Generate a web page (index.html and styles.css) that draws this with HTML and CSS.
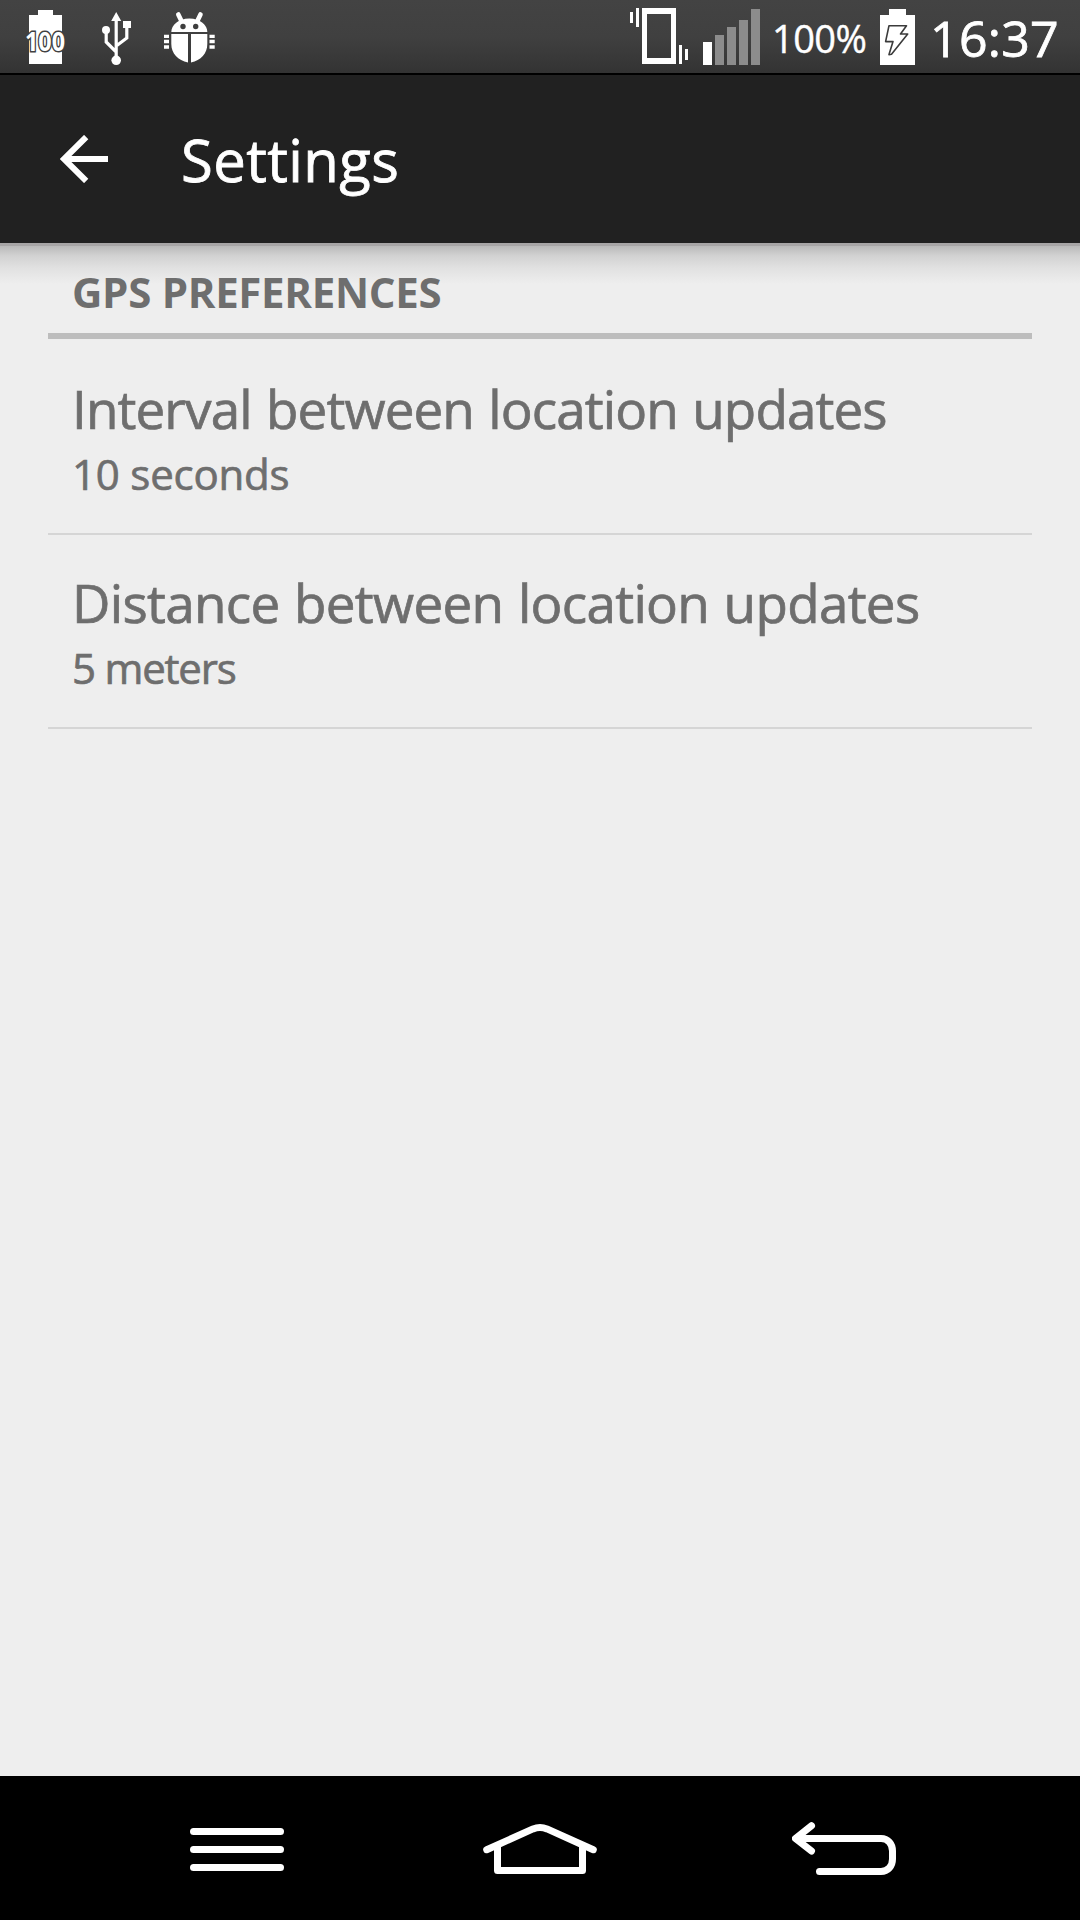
FILE: index.html
```html
<!DOCTYPE html>
<html lang="en">
<head>
<meta charset="utf-8">
<title>Settings</title>
<link rel="stylesheet" href="styles.css">
</head>
<body>
<div class="screen">
  <div class="status-bar">
    <div class="notifications">
      <svg class="battery-level" width="42" height="73" viewBox="25 0 42 73">
        <path fill="#fff" d="M38 10h15v5h9v49H29V15h9z"/>
        <text x="25" y="50.5" class="battery-text" textLength="40" lengthAdjust="spacingAndGlyphs">100</text>
      </svg>
      <svg width="30" height="73" viewBox="102 0 30 73">
        <g fill="none" stroke="#fff" stroke-width="3.2"><path d="M116.2 18v42M106.2 30v12l10 10M126.8 26v12l-10.6 8"/></g>
        <path fill="#fff" d="M116.2 12l5 9h-10zM123 21h8v7h-8z"/>
        <circle cx="106" cy="30" r="4" fill="#fff"/><circle cx="116.2" cy="60.3" r="4.8" fill="#fff"/>
      </svg>
      <svg width="52" height="73" viewBox="163 0 52 73">
        <path fill="#fff" d="M171.3 32c0-7 7-13.500 18-13.500s18 6.500 18 13.500z"/>
        <path stroke="#fff" stroke-width="4.600" stroke-linecap="round" d="M178.300 14.500l3.400 7M200.500 14.500l-3.400 7"/>
        <circle cx="183" cy="26.500" r="2.700" fill="#3e3e3e"/><circle cx="195.700" cy="26.500" r="2.700" fill="#3e3e3e"/>
        <path fill="#fff" d="M171.300 34H188v28.500c-10-2-16.700-9-16.700-18.500zM191 34h16.300v10c0 9.500-6.300 16.500-16.300 18.500zM164 34.700h5v3.300h-5zM164 39.800h5v3.500h-5zM164 45.200h5v3.500h-5zM209.500 34.700h5.200v3.300h-5.200zM209.500 39.800h5.200v3.500h-5.200zM209.500 45.200h5.200v3.500h-5.200z"/>
      </svg>
    </div>
    <div class="system">
      <svg width="58" height="73" viewBox="630 0 58 73" fill="#fff">
        <path fill-rule="evenodd" d="M642 8h34v56h-34zM647 14v44h24V14z"/>
        <path d="M630 12h3v11h-3zM636 8h3v19h-3zM679 45h3v19h-3zM685 49h3v11h-3z"/>
      </svg>
      <svg class="signal" width="57" height="73" viewBox="703 0 57 73">
        <path fill="#fff" d="M703 42h9v23h-9z"/>
        <path fill="#8c8c8c" d="M715 35h9v30h-9zM727 27h9v38h-9zM739 20h9v45h-9zM751 9h9v56h-9z"/>
      </svg>
      <span class="battery-percent">100%</span>
      <svg width="35" height="73" viewBox="880 0 35 73">
        <path fill="#fff" d="M889 9h17v6h9v50h-35V15h9z"/>
        <path fill="none" stroke="#3b3b3b" stroke-width="1.600" stroke-linejoin="round" d="M889 25.700h17.500l-6 8.300h7.200l-16.200 20.300-2.500.300 4-13h-7.400z"/>
      </svg>
      <span class="clock">16:37</span>
    </div>
  </div>

  <header class="app-bar">
    <svg width="48" height="48" viewBox="60 135 48 48" fill="none" stroke="#fff" stroke-width="6"><path d="M86.200 137L64 159l22.200 22M64 159h44"/></svg>
    <h1>Settings</h1>
  </header>

  <main class="content">
    <h2>GPS PREFERENCES</h2>
    <ul class="preferences">
      <li>
        <div class="title title-interval">Interval between location updates</div>
        <div class="summary">10 seconds</div>
      </li>
      <li>
        <div class="title title-distance">Distance between location updates</div>
        <div class="summary summary-distance">5 meters</div>
      </li>
    </ul>
  </main>

  <nav class="nav-bar">
    <svg width="94" height="144" viewBox="190 1776 94 144" fill="#fff"><rect x="190" y="1828" width="94" height="7" rx="3.500"/><rect x="190" y="1846" width="94" height="7" rx="3.500"/><rect x="190" y="1864" width="94" height="7" rx="3.500"/></svg>
    <svg class="home" width="114" height="144" viewBox="483 1776 114 144" fill="none" stroke="#fff" stroke-width="7" stroke-linecap="round" stroke-linejoin="round"><path d="M486.700 1849.700L533 1828.900Q540 1826 547 1828.900L593.300 1849.700"/><path d="M497.500 1846v24.500h85V1846"/></svg>
    <svg class="back" width="104" height="144" viewBox="792 1776 104 144" fill="none" stroke="#fff" stroke-width="7" stroke-linecap="round" stroke-linejoin="round"><path d="M811.500 1825.800L795.500 1838.500L811.500 1851M797 1838.500H881C888 1838.500 892.500 1844 892.500 1851V1859C892.500 1866 888 1871.500 881 1871.500H819.500"/></svg>
  </nav>
</div>
</body>
</html>
```
FILE: styles.css
```css
* { box-sizing: border-box; }

body {
  margin: 0;
  font-family: "Open Sans", "Noto Sans", sans-serif;
}

svg { display: block; flex: none; }

.screen {
  display: flex;
  flex-direction: column;
  width: 1080px;
  height: 1920px;
  background: #eee;
}

.status-bar {
  display: flex;
  justify-content: space-between;
  height: 75px;
  padding: 0 23px 0 25px;
  border-bottom: 2px solid #000;
  background: linear-gradient(#434343, #404040 50%, #333);
  color: #fff;
}

.notifications, .system { display: flex; }
.notifications { gap: 33px; }
.notifications svg:first-child { margin-right: 2px; }
.notifications svg:last-child { margin-left: -2px; }

.battery-level { overflow: visible; }
.battery-text {
  font-size: 27px;
  font-weight: 700;
  fill: #fff;
  stroke: #404040;
  stroke-width: 3px;
  paint-order: stroke;
}

.signal { margin-left: 15px; }

.battery-percent {
  width: 108px;
  margin-left: 12px;
  font-size: 38px;
  line-height: 76px;
  letter-spacing: -0.6px;
  -webkit-text-stroke: 0.4px;
}

.clock {
  width: 127px;
  margin-left: 15px;
  font-size: 50px;
  line-height: 76px;
  letter-spacing: 0.3px;
  -webkit-text-stroke: 0.8px;
}

.app-bar {
  display: flex;
  align-items: center;
  gap: 73px;
  height: 168px;
  padding-left: 60px;
  background: #212121;
  color: #fff;
}

h1, h2 { margin: 0; }

h1 {
  padding-top: 2px;
  font-size: 58px;
  font-weight: 400;
  line-height: 80px;
  letter-spacing: 0.4px;
  -webkit-text-stroke: 0.8px;
}

.content {
  flex: 1;
  padding: 0 48px;
  border-top: 3px solid #a7a5a6;
  background: linear-gradient(#b9b9b9, #d2d2d2 10px, #e1e1e1 22px, #eee 38px);
}

h2 {
  height: 93px;
  padding: 16px 0 0 24px;
  border-bottom: 6px solid #bdbdbd;
  color: #6e6e6e;
  font-size: 42px;
  line-height: 60px;
  letter-spacing: -0.3px;
}

.preferences {
  margin: 0;
  padding: 2px 0 0;
  list-style: none;
  color: #6e6e6e;
  -webkit-text-stroke: 0.7px;
}

.preferences li {
  height: 194px;
  padding: 38px 0 0 24px;
  border-bottom: 2px solid #d5d5d5;
}

.preferences li:first-child { height: 194px; }
.preferences li + li { margin-top: 0; }

.title {
  font-size: 53px;
  line-height: 60px;
  white-space: nowrap;
}

.title-interval { letter-spacing: -0.9px; word-spacing: 1.5px; }
.title-distance { letter-spacing: -0.7px; word-spacing: 1.5px; }

.summary {
  margin-top: 5px;
  font-size: 42px;
  line-height: 60px;
  letter-spacing: -0.2px;
}

.summary-distance { letter-spacing: -1.2px; }

.nav-bar {
  display: flex;
  height: 144px;
  padding-left: 190px;
  background: #000;
}

.home { margin-left: 199px; }
.back { margin-left: 195px; }
```
